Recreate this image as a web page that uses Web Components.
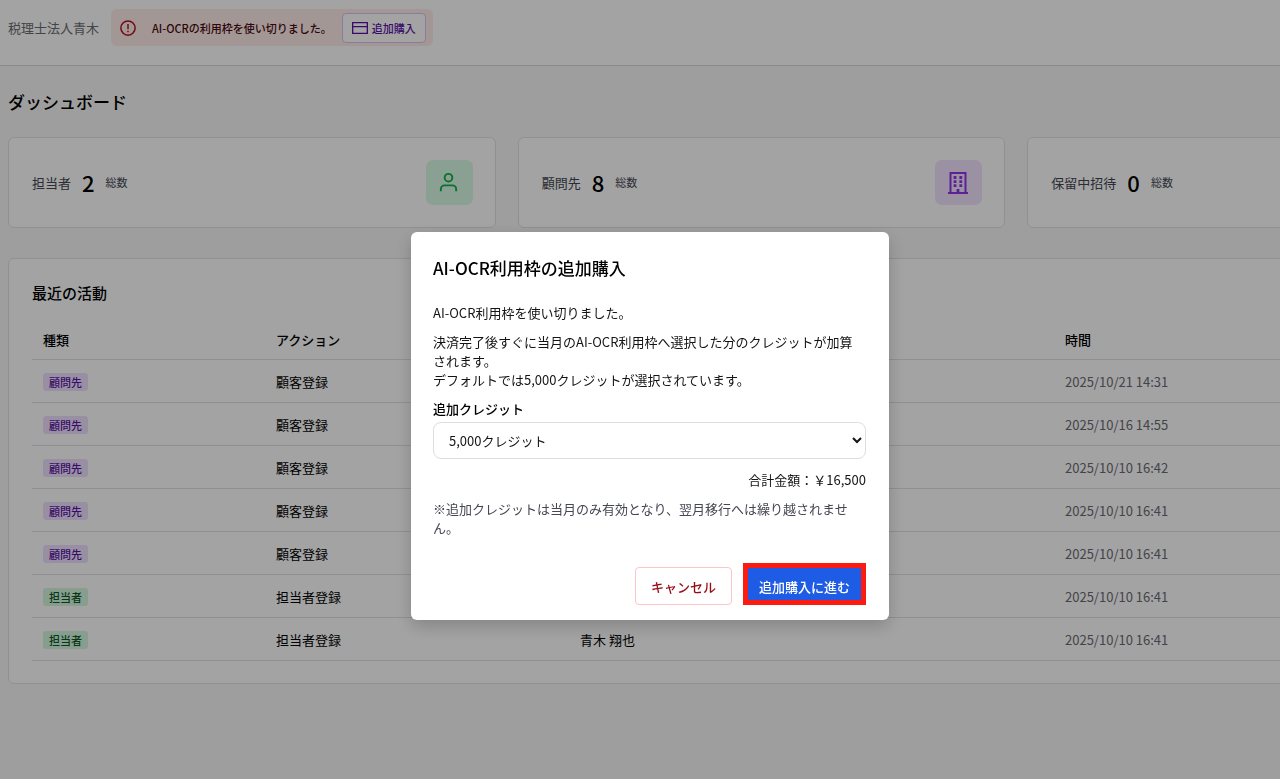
<!DOCTYPE html>
<html lang="ja">
<head>
<meta charset="utf-8">
<title>ダッシュボード</title>
<style>
  html, body {
    height: 100%;
  }
  body {
    margin: 0;
    overflow: hidden;
    background: #f8f8f8;
    color: #000;
    font: 13px/19px "Noto Sans CJK JP", sans-serif;
    --line: #e2e2e4;
    --muted: #454752;
    --purple: #5b12a6;
  }
</style>
</head>
<body>
<dashboard-page>
  <app-header slot="header" office="税理士法人青木">
    <quota-alert action="追加購入">AI-OCRの利用枠を使い切りました。</quota-alert>
  </app-header>
  <stat-card slot="stats" label="担当者" value="2" icon="user"></stat-card>
  <stat-card slot="stats" label="顧問先" value="8" icon="building"></stat-card>
  <stat-card slot="stats" label="保留中招待" value="0" icon="mail"></stat-card>
  <activity-table heading="最近の活動"></activity-table>
</dashboard-page>
<purchase-dialog heading="AI-OCR利用枠の追加購入"></purchase-dialog>

<script>
"use strict";

const icons = {
  alert: `<circle cx="12" cy="12" r="9.500"/><path d="M12 6.500v7M12 15.500v2.200"/>`,
  card: `<path d="M1 4h22v16H1zM1 10h22"/>`,
  user: `<circle cx="12" cy="7" r="4"/><path d="M4 21v-2a4 4 0 0 1 4-4h8a4 4 0 0 1 4 4v2"/>`,
  building: `<path d="M4.500 22V2h15v20M2 22h20"/><path stroke-width="2.800" d="M7.600 6.500h2.800M13.400 6.500h2.800M7.600 10.600h2.800M13.400 10.600h2.800M7.600 14.700h2.800M13.400 14.700h2.800M12 18V22"/>`,
  mail: `<path d="M2 5h20v14H2zM2 6l10 7 10-7"/>`,
};

function svg(name, size) {
  return `<svg width="${size}" height="${size}" viewBox="0 0 24 24" fill="none" stroke="currentColor" stroke-width="2" aria-hidden="true">${icons[name]}</svg>`;
}

class DashboardPage extends HTMLElement {
  constructor() {
    super();
    this.attachShadow({ mode: "open" }).innerHTML = `
      <style>
        :host {
          display: block;
          overflow: hidden;
        }
        main {
          box-sizing: border-box;
          min-width: 1523px;
          padding: 24px 8px;
        }
        h1 {
          margin: 0 0 23px;
          font-size: 17px;
          font-weight: 500;
          line-height: 24px;
        }
        .stats {
          display: grid;
          grid-template-columns: repeat(3, 1fr);
          gap: 22px;
          margin-bottom: 30px;
        }
      </style>
      <slot name="header"></slot>
      <main>
        <h1>ダッシュボード</h1>
        <div class="stats"><slot name="stats"></slot></div>
        <slot></slot>
      </main>
    `;
  }
}
customElements.define("dashboard-page", DashboardPage);

class AppHeader extends HTMLElement {
  constructor() {
    super();
    this.attachShadow({ mode: "open" }).innerHTML = `
      <style>
        :host {
          display: flex;
          align-items: center;
          gap: 12px;
          padding: 9px 8px 19px;
          border-bottom: 1px solid #dcdcdf;
          background: #fff;
        }
        span { color: #6b6c72; }
      </style>
      <span>${this.getAttribute("office")}</span>
      <slot></slot>
    `;
  }
}
customElements.define("app-header", AppHeader);

class QuotaAlert extends HTMLElement {
  constructor() {
    super();
    this.attachShadow({ mode: "open" }).innerHTML = `
      <style>
        :host {
          display: flex;
          align-items: center;
          padding: 4px 7px 3px 8px;
          border-radius: 6px;
          background: #ffecea;
          color: #4a0a10;
          font-size: 11px;
          font-weight: 500;
        }
        .icon {
          display: flex;
          margin-right: 15px;
          color: #b0121f;
        }
        button {
          display: flex;
          align-items: center;
          gap: 4px;
          height: 30px;
          margin-left: 10px;
          padding: 0 9px;
          border: 1px solid #d9c2f7;
          border-radius: 4px;
          background: #fff;
          color: var(--purple);
          font: inherit;
        }
      </style>
      <span class="icon">${svg("alert", 18)}</span>
      <slot></slot>
      <button type="button">${svg("card", 16)}${this.getAttribute("action")}</button>
    `;
  }
}
customElements.define("quota-alert", QuotaAlert);

class StatCard extends HTMLElement {
  constructor() {
    super();
    let icon = this.getAttribute("icon");
    this.attachShadow({ mode: "open" }).innerHTML = `
      <style>
        :host {
          display: flex;
          align-items: center;
          gap: 11px;
          padding: 22px 22px 22px 23px;
          border: 1px solid var(--line);
          border-radius: 6px;
          background: #fff;
          color: var(--muted);
        }
        strong {
          color: #000;
          font-size: 22px;
          font-weight: 500;
        }
        small { font-size: 11px; }
        .icon {
          box-sizing: border-box;
          display: grid;
          place-items: center;
          width: 47px;
          height: 45px;
          margin-left: auto;
          padding-right: 2px;
          border-radius: 7px;
          background: #f1e4ff;
          color: #9333ea;
        }
        .icon.user {
          background: #d8fbe4;
          color: #12b04b;
        }
      </style>
      <span>${this.getAttribute("label")}</span>
      <strong>${this.getAttribute("value")}</strong>
      <small>総数</small>
      <span class="icon ${icon}">${svg(icon, icon === "user" ? 23 : 24)}</span>
    `;
  }
}
customElements.define("stat-card", StatCard);

class TypeBadge extends HTMLElement {
  constructor() {
    super();
    this.attachShadow({ mode: "open" }).innerHTML = `
      <style>
        :host {
          display: inline-block;
          padding: 0 6px;
          border-radius: 3px;
          background: #eee2fe;
          color: var(--purple);
          font-size: 11px;
          font-weight: 500;
          line-height: 18px;
          vertical-align: middle;
        }
        :host([kind="staff"]) {
          background: #d3f8e0;
          color: #0c5527;
        }
      </style>
      <slot></slot>
    `;
  }
}
customElements.define("type-badge", TypeBadge);

const activities = [
  { type: "顧問先", action: "顧客登録", target: "", time: "2025/10/21 14:31" },
  { type: "顧問先", action: "顧客登録", target: "", time: "2025/10/16 14:55" },
  { type: "顧問先", action: "顧客登録", target: "", time: "2025/10/10 16:42" },
  { type: "顧問先", action: "顧客登録", target: "", time: "2025/10/10 16:41" },
  { type: "顧問先", action: "顧客登録", target: "", time: "2025/10/10 16:41" },
  { type: "担当者", action: "担当者登録", target: "", time: "2025/10/10 16:41" },
  { type: "担当者", action: "担当者登録", target: "青木 翔也", time: "2025/10/10 16:41" },
];

class ActivityTable extends HTMLElement {
  constructor() {
    super();
    this.attachShadow({ mode: "open" }).innerHTML = `
      <style>
        :host {
          display: block;
          padding: 22px 23px;
          border: 1px solid var(--line);
          border-radius: 6px;
          background: #fff;
        }
        h2 {
          margin: 0 0 14px;
          font-size: 15px;
          font-weight: 500;
          line-height: 24px;
        }
        table {
          width: 100%;
          table-layout: fixed;
          border-collapse: separate;
          border-spacing: 0;
        }
        th, td {
          box-sizing: border-box;
          height: 43px;
          padding: 0 11px;
          border-bottom: 1px solid var(--line);
          text-align: left;
        }
        th {
          height: 41px;
          font-weight: 500;
        }
        th:nth-child(1) { width: 233px; }
        th:nth-child(2) { width: 304px; }
        th:nth-child(3) { width: 485px; }
        td:last-child { color: #6a6b74; }
      </style>
      <h2>${this.getAttribute("heading")}</h2>
      <table>
        <thead>
          <tr><th>種類</th><th>アクション</th><th></th><th>時間</th></tr>
        </thead>
        <tbody></tbody>
      </table>
    `;
    let body = this.shadowRoot.querySelector("tbody");
    for (let { type, action, target, time } of activities) {
      let kind = type === "担当者" ? "staff" : "client";
      let row = body.insertRow();
      row.innerHTML = `
        <td><type-badge kind="${kind}">${type}</type-badge></td>
        <td>${action}</td>
        <td>${target}</td>
        <td>${time}</td>
      `;
    }
  }
}
customElements.define("activity-table", ActivityTable);

class PurchaseDialog extends HTMLElement {
  constructor() {
    super();
    this.attachShadow({ mode: "open" }).innerHTML = `
      <style>
        :host {
          position: fixed;
          inset: 0;
          display: grid;
          place-items: center;
          padding: 73px 0 0 20px;
          background: rgba(0, 0, 0, 0.36);
        }
        section {
          box-sizing: border-box;
          width: 478px;
          max-width: 100%;
          padding: 24px 23px 15px 22px;
          border-radius: 6px;
          background: #fff;
          box-shadow: 0 6px 18px rgba(0, 0, 0, 0.2);
        }
        h2 {
          margin: 0 0 23px;
          font-size: 17px;
          font-weight: 500;
          line-height: 24px;
        }
        p {
          margin: 0 0 10px;
          color: #141416;
        }
        .lead { padding-right: 8px; }
        label {
          display: block;
          margin-bottom: 4px;
          font-weight: 500;
        }
        select {
          display: block;
          width: 100%;
          height: 37px;
          margin-bottom: 11px;
          padding: 0 0 0 11px;
          border: 1px solid #dedede;
          border-radius: 8px;
          background: #fff;
          color: #141416;
          font: inherit;
        }
        .total { text-align: right; }
        .note { color: var(--muted); }
        footer {
          display: flex;
          align-items: flex-end;
          justify-content: flex-end;
          gap: 11px;
          margin-top: 26px;
        }
        button {
          height: 38px;
          padding: 0 15px;
          border: 1px solid #fcc5c9;
          border-radius: 4px;
          background: #fff;
          color: #930d14;
          font: inherit;
          font-weight: 500;
        }
        .primary {
          height: 42px;
          padding: 4px 11px 0;
          border: 5px solid #fb1b10;
          border-radius: 0;
          background: #1f5ce6;
          color: #fff;
        }
      </style>
      <section role="dialog" aria-labelledby="title">
        <h2 id="title">${this.getAttribute("heading")}</h2>
        <p class="lead">AI-OCR利用枠を使い切りました。</p>
        <p class="lead">決済完了後すぐに当月のAI-OCR利用枠へ選択した分のクレジットが加算されます。<br>デフォルトでは5,000クレジットが選択されています。</p>
        <label for="credit">追加クレジット</label>
        <select id="credit"><option>5,000クレジット</option></select>
        <p class="total">合計金額：￥16,500</p>
        <p class="note">※追加クレジットは当月のみ有効となり、翌月移行へは繰り越されません。</p>
        <footer>
          <button type="button">キャンセル</button>
          <button type="button" class="primary">追加購入に進む</button>
        </footer>
      </section>
    `;
  }
}
customElements.define("purchase-dialog", PurchaseDialog);
</script>
</body>
</html>
